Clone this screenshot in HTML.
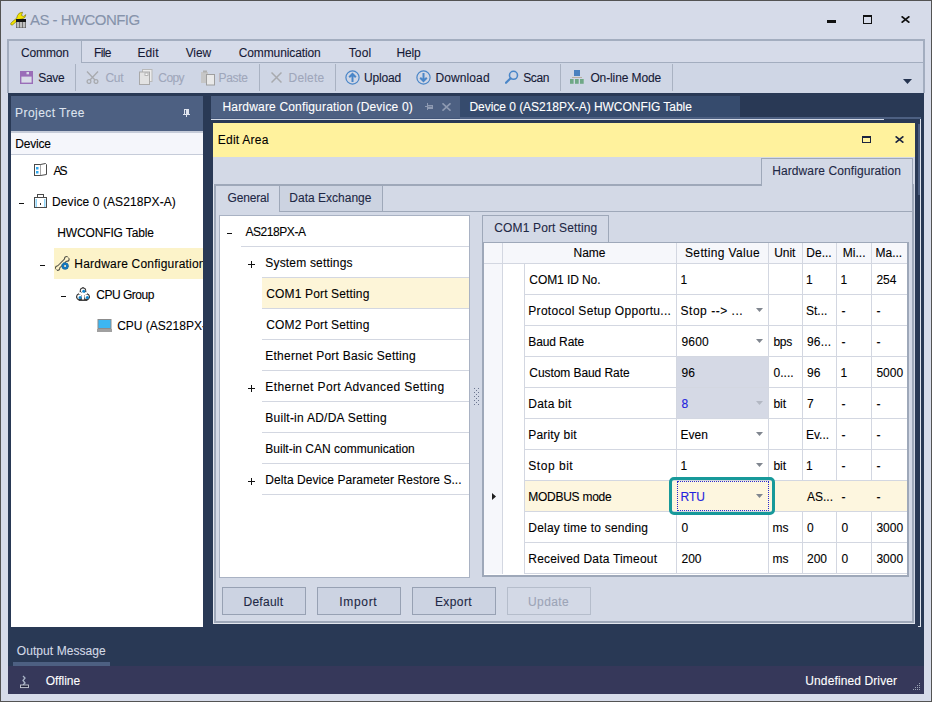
<!DOCTYPE html><html><head><meta charset="utf-8"><style>
html,body{margin:0;padding:0;width:932px;height:702px;overflow:hidden;}
body{position:relative;font-family:"Liberation Sans",sans-serif;font-size:12px;}
body>div,body>svg{position:absolute;}
.t{white-space:nowrap;line-height:20px;height:20px;-webkit-text-stroke:0.1px currentColor;}
</style></head><body>
<div style="left:0px;top:0px;width:932px;height:702px;background:#d6dbe9;"></div>
<div style="left:0px;top:0px;width:932px;height:1px;background:#535353;"></div>
<div style="left:0px;top:701px;width:932px;height:1px;background:#535353;"></div>
<div style="left:0px;top:0px;width:1px;height:702px;background:#535353;"></div>
<div style="left:931px;top:0px;width:1px;height:702px;background:#535353;"></div>
<div class="t" style="left:30.00px;top:10px;font-size:15px;color:#8693ab;letter-spacing:-0.542px;">AS - HWCONFIG</div>
<svg style="left:10px;top:11px" width="17" height="17" viewBox="0 0 17 17">
<path d="M0.6 12.8 Q0.8 14.6 2.6 13.9 L8.5 8.6 L12 8 Q15.6 7.2 15.9 3.6 L13.6 5.4 L11.4 4.4 L12.6 1.2 Q8.8 1.2 7.4 4.6 L6.8 7 L1.4 11.6 Z" fill="#f3e400" stroke="#746c00" stroke-width="0.6" stroke-linejoin="round"/>
<rect x="6" y="8" width="10" height="9" fill="#4a4a4a"/>
<rect x="6" y="8" width="10" height="3" fill="#141414"/>
<rect x="6.6" y="11" width="2.4" height="5.6" fill="#bfbfbf"/><rect x="9.6" y="11" width="2.6" height="5.6" fill="#bfbfbf"/><rect x="12.8" y="11" width="2.6" height="5.6" fill="#bfbfbf"/>
</svg>
<div style="left:827px;top:20px;width:9px;height:3px;background:#111;"></div>
<div style="left:863px;top:15px;width:9px;height:9px;border:1px solid #111;border-top-width:2px;box-sizing:border-box;"></div>
<svg style="left:901px;top:16px" width="9" height="7" viewBox="0 0 9 7"><path d="M0.6 0.4 L8.4 6.6 M8.4 0.4 L0.6 6.6" stroke="#111" stroke-width="1.8"/></svg>
<div style="left:7px;top:39px;width:918px;height:24px;background:#d6dbe9;border:2px solid #a3adbf;border-bottom:none;box-sizing:border-box;"></div>
<div style="left:7px;top:62px;width:918px;height:31px;background:#cfd6e5;border-left:2px solid #a3adbf;border-right:2px solid #a3adbf;border-top:1px solid #a3adbf;box-sizing:border-box;"></div>
<div style="left:7px;top:39px;width:75px;height:24px;background:#cfd6e5;border:2px solid #a3adbf;border-right-width:1px;border-bottom:none;box-sizing:border-box;"></div>
<div class="t" style="left:21.00px;top:43px;font-size:12px;color:#161a36;letter-spacing:-0.140px;">Common</div>
<div class="t" style="left:94.00px;top:43px;font-size:12px;color:#161a36;letter-spacing:-0.633px;">File</div>
<div class="t" style="left:137.40px;top:43px;font-size:12px;color:#161a36;letter-spacing:0.133px;">Edit</div>
<div class="t" style="left:185.70px;top:43px;font-size:12px;color:#161a36;letter-spacing:-0.100px;">View</div>
<div class="t" style="left:238.70px;top:43px;font-size:12px;color:#161a36;letter-spacing:-0.108px;">Communication</div>
<div class="t" style="left:348.70px;top:43px;font-size:12px;color:#161a36;letter-spacing:0.133px;">Tool</div>
<div class="t" style="left:396.60px;top:43px;font-size:12px;color:#161a36;letter-spacing:-0.233px;">Help</div>
<div style="left:75px;top:64px;width:1px;height:27px;background:#a9b2c2;"></div>
<div style="left:259px;top:64px;width:1px;height:27px;background:#a9b2c2;"></div>
<div style="left:335px;top:64px;width:1px;height:27px;background:#a9b2c2;"></div>
<div style="left:560px;top:64px;width:1px;height:27px;background:#a9b2c2;"></div>
<div style="left:672px;top:64px;width:1px;height:27px;background:#a9b2c2;"></div>
<div class="t" style="left:38.30px;top:68px;font-size:12px;color:#161a36;letter-spacing:-0.300px;">Save</div>
<div class="t" style="left:105.50px;top:68px;font-size:12px;color:#9fa7bb;letter-spacing:-0.350px;">Cut</div>
<div class="t" style="left:158.30px;top:68px;font-size:12px;color:#9fa7bb;letter-spacing:-0.567px;">Copy</div>
<div class="t" style="left:218.60px;top:68px;font-size:12px;color:#9fa7bb;letter-spacing:-0.350px;">Paste</div>
<div class="t" style="left:288.60px;top:68px;font-size:12px;color:#9fa7bb;letter-spacing:0.160px;">Delete</div>
<div class="t" style="left:364.10px;top:68px;font-size:12px;color:#161a36;letter-spacing:-0.200px;">Upload</div>
<div class="t" style="left:435.40px;top:68px;font-size:12px;color:#161a36;letter-spacing:0.114px;">Download</div>
<div class="t" style="left:523.30px;top:68px;font-size:12px;color:#161a36;letter-spacing:-0.433px;">Scan</div>
<div class="t" style="left:590.40px;top:68px;font-size:12px;color:#161a36;letter-spacing:-0.109px;">On-line Mode</div>
<svg style="left:20px;top:71px" width="13" height="13" viewBox="0 0 13 13"><rect x="0" y="0" width="13" height="13" fill="#9a6db8"/><rect x="1.4" y="5.6" width="10.2" height="6" fill="#d9dce8"/><rect x="6.5" y="1" width="2.5" height="2.3" fill="#d9dce8"/></svg>
<svg style="left:86px;top:71px" width="13" height="13" viewBox="0 0 13 13"><path d="M1 0.5 L9 9 M12 0.5 L4 9" stroke="#a8aaae" stroke-width="1.3"/><circle cx="3" cy="10.5" r="1.9" fill="none" stroke="#a8aaae" stroke-width="1.3"/><circle cx="10" cy="10.5" r="1.9" fill="none" stroke="#a8aaae" stroke-width="1.3"/></svg>
<svg style="left:139px;top:69px" width="14" height="16" viewBox="0 0 14 16"><rect x="3.5" y="0.5" width="9.5" height="12" fill="#ececec" stroke="#b9b9b9"/><rect x="0.5" y="3" width="10" height="12.5" fill="#e2e2e2" stroke="#a9a9a9"/><rect x="6" y="4" width="3" height="2.5" fill="#fafafa" stroke="#a9a9a9" stroke-width="0.8"/></svg>
<svg style="left:201px;top:70px" width="14" height="16" viewBox="0 0 14 16"><rect x="0" y="2" width="7" height="11" fill="#c6c6c6"/><rect x="2" y="0.5" width="4" height="2" fill="#b0b0b0"/><rect x="5.5" y="4.5" width="8" height="10.5" fill="#e9e9e9" stroke="#9e9e9e" stroke-width="1"/></svg>
<svg style="left:271px;top:72px" width="11" height="11" viewBox="0 0 11 11"><path d="M0.5 0.5 L10.5 10.5 M10.5 0.5 L0.5 10.5" stroke="#a8aaae" stroke-width="1.5"/></svg>
<svg style="left:345px;top:70px" width="15" height="15" viewBox="0 0 15 15"><circle cx="7.5" cy="7.5" r="6.6" fill="none" stroke="#4a86c8" stroke-width="1.2"/><path d="M7.5 12 V4 M4.2 7.3 L7.5 4 L10.8 7.3" fill="none" stroke="#4a86c8" stroke-width="2"/></svg>
<svg style="left:416px;top:70px" width="15" height="15" viewBox="0 0 15 15"><circle cx="7.5" cy="7.5" r="6.6" fill="none" stroke="#4a86c8" stroke-width="1.2"/><path d="M7.5 3 V11 M4.2 7.7 L7.5 11 L10.8 7.7" fill="none" stroke="#4a86c8" stroke-width="2"/></svg>
<svg style="left:505px;top:70px" width="14" height="14" viewBox="0 0 14 14"><circle cx="8.5" cy="5.3" r="4" fill="none" stroke="#4a86c8" stroke-width="1.6"/><path d="M5.6 8.2 L1 12.8" stroke="#4a86c8" stroke-width="2.2" stroke-linecap="round"/></svg>
<svg style="left:570px;top:69px" width="14" height="15" viewBox="0 0 14 15"><rect x="4" y="1" width="6" height="6" fill="#4a81bf"/><rect x="2" y="8" width="10" height="1" fill="#b9ada0"/><rect x="0" y="10" width="3.6" height="4.8" fill="#6fa886"/><rect x="5" y="10" width="3.7" height="4.8" fill="#6fa886"/><rect x="10" y="10" width="3.7" height="4.8" fill="#6fa886"/></svg>
<svg style="left:903px;top:79px" width="9" height="5" viewBox="0 0 9 5"><path d="M0 0 H9 L4.5 5 Z" fill="#253450"/></svg>
<div style="left:8px;top:93px;width:916px;height:573px;background:#293955;"></div>
<div style="left:8px;top:666px;width:916px;height:28px;background:#36385a;"></div>
<div style="left:11px;top:96px;width:192px;height:35px;background:#4d6082;"></div>
<div class="t" style="left:15.10px;top:103px;font-size:12px;color:#dde3ee;letter-spacing:0.427px;">Project Tree</div>
<svg style="left:183px;top:109px" width="7" height="8" viewBox="0 0 7 8"><rect x="1" y="0" width="5" height="5" fill="#dfe4ee"/><rect x="2" y="1" width="1" height="4" fill="#56688a"/><rect x="0" y="5" width="7" height="1" fill="#dfe4ee"/><rect x="3" y="6" width="1" height="2" fill="#dfe4ee"/></svg>
<div style="left:11px;top:131px;width:192px;height:2px;background:#c6ccd9;"></div>
<div style="left:11px;top:133px;width:192px;height:21px;background:#f5f6fb;"></div>
<div style="left:11px;top:154px;width:192px;height:1px;background:#c6ccd9;"></div>
<div style="left:11px;top:155px;width:192px;height:472px;background:#ffffff;"></div>
<div class="t" style="left:15.20px;top:134px;font-size:12px;color:#000000;letter-spacing:-0.180px;">Device</div>
<div style="left:54px;top:248px;width:149px;height:31px;background:#fcf3c9;"></div>
<div class="t" style="left:53.40px;top:161px;font-size:12px;color:#000000;letter-spacing:-1.800px;">AS</div>
<div style="left:19px;top:203px;width:5px;height:1px;background:#111;"></div>
<div class="t" style="left:52.10px;top:192px;font-size:12px;color:#000000;letter-spacing:0.089px;">Device 0 (AS218PX-A)</div>
<div class="t" style="left:57.20px;top:223px;font-size:12px;color:#000000;letter-spacing:-0.131px;">HWCONFIG Table</div>
<div style="left:40px;top:265px;width:5px;height:1px;background:#111;"></div>
<div class="t" style="left:74.30px;top:254px;font-size:12px;color:#000000;letter-spacing:0.214px;width:128.70px;overflow:hidden;">Hardware Configuration</div>
<div style="left:61px;top:296px;width:5px;height:1px;background:#111;"></div>
<div class="t" style="left:96.30px;top:285px;font-size:12px;color:#000000;letter-spacing:-0.487px;">CPU Group</div>
<div class="t" style="left:117.20px;top:316px;font-size:12px;color:#000000;width:85.80px;overflow:hidden;">CPU (AS218PX-A)</div>
<div style="left:203px;top:96px;width:8px;height:531px;background:#293955;"></div>
<svg style="left:34px;top:163px" width="13" height="13" viewBox="0 0 13 13"><rect x="0.5" y="1.5" width="6" height="11" fill="#fff" stroke="#4a4a4a"/><path d="M6.5 1.5 L11.5 0.5 L12.5 1.5 V11.5 L6.5 12.5" fill="#fff" stroke="#4a4a4a"/><rect x="2" y="4" width="2.5" height="2.5" fill="#2ea8ef"/><rect x="2" y="8" width="2.5" height="2.5" fill="#2ea8ef"/></svg>
<svg style="left:34px;top:194px" width="13" height="14" viewBox="0 0 13 14"><rect x="3.5" y="0.5" width="6" height="3" fill="#fff" stroke="#4a4a4a"/><rect x="0.5" y="3.5" width="12" height="10" fill="#fff" stroke="#4a4a4a"/><rect x="1.5" y="5" width="1.5" height="8" fill="#8fd3f7"/><rect x="10" y="5" width="1.5" height="8" fill="#8fd3f7"/><rect x="6" y="9" width="1" height="2" fill="#333"/></svg>
<svg style="left:55px;top:256px" width="15" height="15" viewBox="0 0 15 15">
<path d="M2.6 12 L11.4 3.2" stroke="#55544a" stroke-width="3.8" stroke-linecap="round"/>
<circle cx="11.8" cy="2.9" r="2.9" fill="#55544a"/><circle cx="2.5" cy="12.2" r="2.7" fill="#55544a"/>
<path d="M2.6 12 L11.4 3.2" stroke="#fdf3c9" stroke-width="1.8"/>
<circle cx="11.8" cy="2.9" r="1.8" fill="#fdf3c9"/><circle cx="2.5" cy="12.2" r="1.6" fill="#fdf3c9"/>
<path d="M13 0 L15 2 M0 13.5 L1.5 15" stroke="#fdf3c9" stroke-width="1.6"/>
<circle cx="10.1" cy="10" r="3.5" fill="#1678bd"/><circle cx="10.1" cy="10" r="3.5" fill="none" stroke="#0b4f86" stroke-width="0.6" stroke-dasharray="1 1"/>
<rect x="9.2" y="9.1" width="1.8" height="1.8" fill="#fde6bf"/>
</svg>
<svg style="left:76px;top:287px" width="14" height="14" viewBox="0 0 14 14">
<path d="M7 0.3 L13.6 10 L11 13.6 H3 L0.4 10 Z" fill="#3a3a3a" stroke="#3a3a3a" stroke-width="1" stroke-linejoin="round"/>
<circle cx="7" cy="3.6" r="3.2" fill="#3a3a3a"/><circle cx="3.4" cy="9.8" r="3.2" fill="#3a3a3a"/><circle cx="10.6" cy="9.8" r="3.2" fill="#3a3a3a"/>
<path d="M7 5 V12.5 M7 8 L3 5.5 M7 8 L11 5.5" stroke="#fff" stroke-width="2.2"/>
<circle cx="7" cy="3.6" r="2.2" fill="#fff"/><circle cx="3.4" cy="9.8" r="2.2" fill="#fff"/><circle cx="10.6" cy="9.8" r="2.2" fill="#fff"/>
<circle cx="7.7" cy="4.3" r="1.5" fill="#0f86d0"/><circle cx="4.1" cy="10.5" r="1.5" fill="#0f86d0"/><circle cx="11.3" cy="10.5" r="1.5" fill="#0f86d0"/>
</svg>
<svg style="left:97px;top:319px" width="15" height="13" viewBox="0 0 15 13"><rect x="1" y="0.5" width="13" height="9" fill="#3cb6f2" stroke="#8c8c8c"/><rect x="0" y="10" width="15" height="3" fill="#a0a0a0"/></svg>
<div style="left:211px;top:96px;width:249px;height:23px;background:#4d6082;"></div>
<div style="left:460px;top:96px;width:280px;height:21px;background:#364b6d;"></div>
<div style="left:460px;top:117px;width:461px;height:2px;background:#4d6082;"></div>
<div style="left:211px;top:118px;width:249px;height:1px;background:#44577a;"></div>
<div class="t" style="left:222.50px;top:97px;font-size:12px;color:#ffffff;letter-spacing:0.172px;">Hardware Configuration (Device 0)</div>
<svg style="left:425px;top:103px" width="9" height="7" viewBox="0 0 9 7"><rect x="0" y="3" width="2" height="1" fill="#8e9ab2"/><rect x="2" y="0" width="1" height="7" fill="#8e9ab2"/><rect x="3" y="2" width="5" height="4" fill="#8e9ab2"/><rect x="3" y="3" width="4" height="1" fill="#6d7c98"/></svg>
<svg style="left:442px;top:103px" width="9" height="8" viewBox="0 0 9 8"><path d="M0.5 0.3 L8.5 7.7 M8.5 0.3 L0.5 7.7" stroke="#8e9ab2" stroke-width="1.6"/></svg>
<div class="t" style="left:469.50px;top:97px;font-size:12px;color:#ffffff;letter-spacing:-0.044px;">Device 0 (AS218PX-A) HWCONFIG Table</div>
<div style="left:211px;top:119px;width:673px;height:1px;background:#d4dae6;"></div>
<div style="left:213px;top:123px;width:702px;height:34px;background:#fff29d;"></div>
<div class="t" style="left:217.80px;top:130px;font-size:12px;color:#000000;letter-spacing:0.237px;">Edit Area</div>
<div style="left:862px;top:136px;width:9px;height:7px;border:1px solid #1b2440;border-top-width:2px;box-sizing:border-box;"></div>
<svg style="left:895px;top:136px" width="9" height="7" viewBox="0 0 9 7"><path d="M0.6 0.4 L8.4 6.6 M8.4 0.4 L0.6 6.6" stroke="#1b2440" stroke-width="1.7"/></svg>
<div style="left:213px;top:157px;width:702px;height:467px;background:#d3d9e6;"></div>
<div style="left:213px;top:184px;width:1px;height:440px;background:#e3e7ef;"></div>
<div style="left:213px;top:623px;width:702px;height:1px;background:#e3e7ef;"></div>
<div style="left:214px;top:184px;width:700px;height:439px;border:2px solid #9ea8b9;box-sizing:border-box;"></div>
<div style="left:761px;top:158px;width:152px;height:28px;background:#d3d9e6;border:1px solid #9ea8b9;border-bottom:none;box-sizing:border-box;"></div>
<div class="t" style="left:772.20px;top:161px;font-size:12px;color:#1e2845;letter-spacing:0.100px;">Hardware Configuration</div>
<div style="left:216px;top:186px;width:64px;height:26px;background:#d3d9e6;border-right:1px solid #9ea8b9;box-sizing:border-box;"></div>
<div style="left:280px;top:186px;width:103px;height:26px;background:#ccd3e1;border-right:1px solid #9ea8b9;border-bottom:1px solid #9ea8b9;box-sizing:border-box;"></div>
<div style="left:383px;top:211px;width:530px;height:1px;background:#9ea8b9;"></div>
<div class="t" style="left:227.60px;top:188px;font-size:12px;color:#1e2845;letter-spacing:-0.200px;">General</div>
<div class="t" style="left:289.30px;top:188px;font-size:12px;color:#1e2845;letter-spacing:0.008px;">Data Exchange</div>
<div style="left:219px;top:215px;width:251px;height:363px;background:#fff;border:1px solid #a9b2c3;box-sizing:border-box;"></div>
<div style="left:227px;top:233px;width:5px;height:1px;background:#111;"></div>
<div class="t" style="left:245.40px;top:222px;font-size:12px;color:#000000;letter-spacing:-0.425px;">AS218PX-A</div>
<div style="left:241px;top:246px;width:228px;height:1px;background:#d3d7e1;"></div>
<div style="left:262px;top:277px;width:207px;height:1px;background:#d3d7e1;"></div>
<div style="left:248px;top:264px;width:7px;height:1px;background:#111;"></div>
<div style="left:251px;top:261px;width:1px;height:7px;background:#111;"></div>
<div class="t" style="left:265.30px;top:253px;font-size:12px;color:#000000;letter-spacing:0.179px;">System settings</div>
<div style="left:262px;top:278px;width:207px;height:31px;background:#fdf5d8;"></div>
<div style="left:262px;top:308px;width:207px;height:1px;background:#d3d7e1;"></div>
<div class="t" style="left:266.30px;top:284px;font-size:12px;color:#000000;letter-spacing:0.144px;">COM1 Port Setting</div>
<div style="left:262px;top:339px;width:207px;height:1px;background:#d3d7e1;"></div>
<div class="t" style="left:266.30px;top:315px;font-size:12px;color:#000000;letter-spacing:0.144px;">COM2 Port Setting</div>
<div style="left:262px;top:370px;width:207px;height:1px;background:#d3d7e1;"></div>
<div class="t" style="left:265.30px;top:346px;font-size:12px;color:#000000;letter-spacing:0.238px;">Ethernet Port Basic Setting</div>
<div style="left:262px;top:401px;width:207px;height:1px;background:#d3d7e1;"></div>
<div style="left:248px;top:388px;width:7px;height:1px;background:#111;"></div>
<div style="left:251px;top:385px;width:1px;height:7px;background:#111;"></div>
<div class="t" style="left:265.30px;top:377px;font-size:12px;color:#000000;letter-spacing:0.390px;">Ethernet Port Advanced Setting</div>
<div style="left:262px;top:432px;width:207px;height:1px;background:#d3d7e1;"></div>
<div class="t" style="left:265.30px;top:408px;font-size:12px;color:#000000;letter-spacing:0.248px;">Built-in AD/DA Setting</div>
<div style="left:262px;top:463px;width:207px;height:1px;background:#d3d7e1;"></div>
<div class="t" style="left:265.30px;top:439px;font-size:12px;color:#000000;letter-spacing:0.004px;">Built-in CAN communication</div>
<div style="left:262px;top:494px;width:207px;height:1px;background:#d3d7e1;"></div>
<div style="left:248px;top:481px;width:7px;height:1px;background:#111;"></div>
<div style="left:251px;top:478px;width:1px;height:7px;background:#111;"></div>
<div class="t" style="left:265.30px;top:470px;font-size:12px;color:#000000;letter-spacing:0.065px;">Delta Device Parameter Restore S...</div>
<svg style="left:474px;top:388px" width="5" height="17" viewBox="0 0 5 17"><rect x="0" y="0" width="1" height="1" fill="#6b7590"/><rect x="4" y="0" width="1" height="1" fill="#6b7590"/><rect x="0" y="4" width="1" height="1" fill="#6b7590"/><rect x="4" y="4" width="1" height="1" fill="#6b7590"/><rect x="0" y="8" width="1" height="1" fill="#6b7590"/><rect x="4" y="8" width="1" height="1" fill="#6b7590"/><rect x="0" y="12" width="1" height="1" fill="#6b7590"/><rect x="4" y="12" width="1" height="1" fill="#6b7590"/><rect x="0" y="16" width="1" height="1" fill="#6b7590"/><rect x="4" y="16" width="1" height="1" fill="#6b7590"/><rect x="2" y="2" width="1" height="1" fill="#6b7590"/><rect x="2" y="6" width="1" height="1" fill="#6b7590"/><rect x="2" y="10" width="1" height="1" fill="#6b7590"/><rect x="2" y="14" width="1" height="1" fill="#6b7590"/></svg>
<div style="left:482px;top:215px;width:127px;height:28px;background:#d3d9e6;border:1px solid #9ea8b9;border-bottom:none;box-sizing:border-box;"></div>
<div class="t" style="left:494.30px;top:218px;font-size:12px;color:#1e2845;letter-spacing:0.138px;">COM1 Port Setting</div>
<div style="left:482px;top:242px;width:427px;height:335px;background:#fff;border:2px solid #9ea8b9;border-top-width:1px;box-sizing:border-box;"></div>
<div style="left:484px;top:243px;width:423px;height:20px;background:#f6f7fb;"></div>
<div style="left:484px;top:263px;width:18px;height:311px;background:#f6f7fb;"></div>
<div style="left:484px;top:263px;width:423px;height:1px;background:#d3d7e1;"></div>
<div style="left:502px;top:243px;width:1px;height:331px;background:#d3d7e1;"></div>
<div style="left:524px;top:264px;width:1px;height:310px;background:#d3d7e1;"></div>
<div style="left:676px;top:243px;width:1px;height:331px;background:#d3d7e1;"></div>
<div style="left:768px;top:243px;width:1px;height:331px;background:#d3d7e1;"></div>
<div style="left:802px;top:243px;width:1px;height:331px;background:#d3d7e1;"></div>
<div style="left:836px;top:243px;width:1px;height:331px;background:#d3d7e1;"></div>
<div style="left:871px;top:243px;width:1px;height:331px;background:#d3d7e1;"></div>
<div class="t" style="left:573.50px;top:243px;font-size:12px;color:#000000;">Name</div>
<div class="t" style="left:685.00px;top:243px;font-size:12px;color:#000000;letter-spacing:0.358px;">Setting Value</div>
<div class="t" style="left:774.20px;top:243px;font-size:12px;color:#000000;letter-spacing:-0.067px;">Unit</div>
<div class="t" style="left:806.30px;top:243px;font-size:12px;color:#000000;">De...</div>
<div class="t" style="left:842.80px;top:243px;font-size:12px;color:#000000;">Mi...</div>
<div class="t" style="left:875.50px;top:243px;font-size:12px;color:#000000;">Ma...</div>
<div style="left:525px;top:294px;width:382px;height:1px;background:#d3d7e1;"></div>
<div class="t" style="left:529.30px;top:270px;font-size:12px;color:#000000;letter-spacing:-0.080px;">COM1 ID No.</div>
<div class="t" style="left:680.50px;top:270px;font-size:12px;color:#000000;">1</div>
<div class="t" style="left:806.00px;top:270px;font-size:12px;color:#000000;">1</div>
<div class="t" style="left:840.50px;top:270px;font-size:12px;color:#000000;">1</div>
<div class="t" style="left:876.40px;top:270px;font-size:12px;color:#000000;">254</div>
<div style="left:525px;top:325px;width:382px;height:1px;background:#d3d7e1;"></div>
<div class="t" style="left:528.30px;top:301px;font-size:12px;color:#000000;letter-spacing:0.300px;">Protocol Setup Opportu...</div>
<div class="t" style="left:680.50px;top:301px;font-size:12px;color:#000000;letter-spacing:0.527px;">Stop --&gt; ...</div>
<svg style="left:756px;top:308px" width="7" height="4" viewBox="0 0 7 4"><path d="M0 0 H7 L3.5 4 Z" fill="#80868f"/></svg>
<div class="t" style="left:806.00px;top:301px;font-size:12px;color:#000000;">St...</div>
<div class="t" style="left:841.50px;top:301px;font-size:12px;color:#000000;">-</div>
<div class="t" style="left:876.40px;top:301px;font-size:12px;color:#000000;">-</div>
<div style="left:525px;top:356px;width:382px;height:1px;background:#d3d7e1;"></div>
<div class="t" style="left:528.30px;top:332px;font-size:12px;color:#000000;letter-spacing:-0.112px;">Baud Rate</div>
<div class="t" style="left:681.50px;top:332px;font-size:12px;color:#000000;letter-spacing:0.200px;">9600</div>
<svg style="left:756px;top:339px" width="7" height="4" viewBox="0 0 7 4"><path d="M0 0 H7 L3.5 4 Z" fill="#80868f"/></svg>
<div class="t" style="left:773.40px;top:332px;font-size:12px;color:#000000;letter-spacing:-0.200px;">bps</div>
<div class="t" style="left:807.00px;top:332px;font-size:12px;color:#000000;letter-spacing:0.200px;">96...</div>
<div class="t" style="left:841.50px;top:332px;font-size:12px;color:#000000;">-</div>
<div class="t" style="left:876.40px;top:332px;font-size:12px;color:#000000;">-</div>
<div style="left:677px;top:357px;width:91px;height:31px;background:#d5d9e5;"></div>
<div style="left:525px;top:387px;width:382px;height:1px;background:#d3d7e1;"></div>
<div class="t" style="left:529.30px;top:363px;font-size:12px;color:#000000;letter-spacing:-0.073px;">Custom Baud Rate</div>
<div class="t" style="left:681.50px;top:363px;font-size:12px;color:#000000;">96</div>
<div class="t" style="left:773.40px;top:363px;font-size:12px;color:#000000;letter-spacing:0.075px;">0....</div>
<div class="t" style="left:807.00px;top:363px;font-size:12px;color:#000000;">96</div>
<div class="t" style="left:840.50px;top:363px;font-size:12px;color:#000000;">1</div>
<div class="t" style="left:876.40px;top:363px;font-size:12px;color:#000000;">5000</div>
<div style="left:677px;top:388px;width:91px;height:30px;background:#d5d9e5;"></div>
<div style="left:525px;top:418px;width:382px;height:1px;background:#d3d7e1;"></div>
<div class="t" style="left:528.30px;top:394px;font-size:12px;color:#000000;letter-spacing:0.229px;">Data bit</div>
<div class="t" style="left:681.50px;top:394px;font-size:12px;color:#2222dd;">8</div>
<svg style="left:756px;top:401px" width="7" height="4" viewBox="0 0 7 4"><path d="M0 0 H7 L3.5 4 Z" fill="#b3b8c3"/></svg>
<div class="t" style="left:773.40px;top:394px;font-size:12px;color:#000000;">bit</div>
<div class="t" style="left:807.00px;top:394px;font-size:12px;color:#000000;">7</div>
<div class="t" style="left:841.50px;top:394px;font-size:12px;color:#000000;">-</div>
<div class="t" style="left:876.40px;top:394px;font-size:12px;color:#000000;">-</div>
<div style="left:525px;top:449px;width:382px;height:1px;background:#d3d7e1;"></div>
<div class="t" style="left:528.30px;top:425px;font-size:12px;color:#000000;letter-spacing:0.178px;">Parity bit</div>
<div class="t" style="left:680.50px;top:425px;font-size:12px;color:#000000;">Even</div>
<svg style="left:756px;top:432px" width="7" height="4" viewBox="0 0 7 4"><path d="M0 0 H7 L3.5 4 Z" fill="#80868f"/></svg>
<div class="t" style="left:806.00px;top:425px;font-size:12px;color:#000000;">Ev...</div>
<div class="t" style="left:841.50px;top:425px;font-size:12px;color:#000000;">-</div>
<div class="t" style="left:876.40px;top:425px;font-size:12px;color:#000000;">-</div>
<div style="left:525px;top:480px;width:382px;height:1px;background:#d3d7e1;"></div>
<div class="t" style="left:528.30px;top:456px;font-size:12px;color:#000000;letter-spacing:0.529px;">Stop bit</div>
<div class="t" style="left:680.50px;top:456px;font-size:12px;color:#000000;">1</div>
<svg style="left:756px;top:463px" width="7" height="4" viewBox="0 0 7 4"><path d="M0 0 H7 L3.5 4 Z" fill="#80868f"/></svg>
<div class="t" style="left:773.40px;top:456px;font-size:12px;color:#000000;">bit</div>
<div class="t" style="left:806.00px;top:456px;font-size:12px;color:#000000;">1</div>
<div class="t" style="left:841.50px;top:456px;font-size:12px;color:#000000;">-</div>
<div class="t" style="left:876.40px;top:456px;font-size:12px;color:#000000;">-</div>
<div style="left:525px;top:481px;width:382px;height:30px;background:#fdf6df;"></div>
<div style="left:525px;top:511px;width:382px;height:1px;background:#d3d7e1;"></div>
<div class="t" style="left:528.30px;top:487px;font-size:12px;color:#000000;letter-spacing:-0.270px;">MODBUS mode</div>
<div class="t" style="left:680.50px;top:487px;font-size:12px;color:#2222dd;">RTU</div>
<svg style="left:756px;top:494px" width="7" height="4" viewBox="0 0 7 4"><path d="M0 0 H7 L3.5 4 Z" fill="#80868f"/></svg>
<div class="t" style="left:807.00px;top:487px;font-size:12px;color:#000000;">AS...</div>
<div class="t" style="left:841.50px;top:487px;font-size:12px;color:#000000;">-</div>
<div class="t" style="left:876.40px;top:487px;font-size:12px;color:#000000;">-</div>
<div style="left:525px;top:542px;width:382px;height:1px;background:#d3d7e1;"></div>
<div class="t" style="left:528.30px;top:518px;font-size:12px;color:#000000;letter-spacing:0.215px;">Delay time to sending</div>
<div class="t" style="left:681.50px;top:518px;font-size:12px;color:#000000;">0</div>
<div class="t" style="left:772.40px;top:518px;font-size:12px;color:#000000;">ms</div>
<div class="t" style="left:807.00px;top:518px;font-size:12px;color:#000000;">0</div>
<div class="t" style="left:841.50px;top:518px;font-size:12px;color:#000000;">0</div>
<div class="t" style="left:876.40px;top:518px;font-size:12px;color:#000000;">3000</div>
<div style="left:525px;top:573px;width:382px;height:1px;background:#d3d7e1;"></div>
<div class="t" style="left:528.30px;top:549px;font-size:12px;color:#000000;letter-spacing:0.200px;">Received Data Timeout</div>
<div class="t" style="left:681.50px;top:549px;font-size:12px;color:#000000;">200</div>
<div class="t" style="left:772.40px;top:549px;font-size:12px;color:#000000;">ms</div>
<div class="t" style="left:807.00px;top:549px;font-size:12px;color:#000000;">200</div>
<div class="t" style="left:841.50px;top:549px;font-size:12px;color:#000000;">0</div>
<div class="t" style="left:876.40px;top:549px;font-size:12px;color:#000000;">3000</div>
<svg style="left:492px;top:493px" width="4" height="7" viewBox="0 0 4 7"><path d="M0 0 L4 3.5 L0 7 Z" fill="#1e1e1e"/></svg>
<div style="left:669px;top:477px;width:106px;height:38px;border:3.5px solid #17999a;border-radius:5px;box-sizing:border-box;"></div>
<div style="left:677px;top:481px;width:92px;height:30px;border:1px dotted #2a2ad0;box-sizing:border-box;"></div>
<div style="left:222px;top:587px;width:84px;height:28px;background:#ccd3e2;border:1px solid #97a1b3;box-sizing:border-box;"></div>
<div class="t" style="left:243.50px;top:592px;font-size:12px;color:#1e2845;letter-spacing:0.267px;">Default</div>
<div style="left:317px;top:587px;width:84px;height:28px;background:#ccd3e2;border:1px solid #97a1b3;box-sizing:border-box;"></div>
<div class="t" style="left:339.20px;top:592px;font-size:12px;color:#1e2845;letter-spacing:0.700px;">Import</div>
<div style="left:412px;top:587px;width:84px;height:28px;background:#ccd3e2;border:1px solid #97a1b3;box-sizing:border-box;"></div>
<div class="t" style="left:434.90px;top:592px;font-size:12px;color:#1e2845;letter-spacing:0.420px;">Export</div>
<div style="left:507px;top:587px;width:84px;height:28px;background:#d3d9e6;border:1px solid #b5bdcb;box-sizing:border-box;"></div>
<div class="t" style="left:528.00px;top:592px;font-size:12px;color:#9ca4b6;letter-spacing:0.400px;">Update</div>
<div style="left:918px;top:124px;width:2px;height:71px;background:#4a5c7e;"></div>
<div style="left:920px;top:119px;width:1px;height:508px;background:#dfe4ee;"></div>
<div style="left:918px;top:626px;width:3px;height:1px;background:#dfe4ee;"></div>
<div class="t" style="left:16.80px;top:641px;font-size:12px;color:#d3d9e5;letter-spacing:0.069px;">Output Message</div>
<div style="left:13px;top:662px;width:97px;height:4px;background:#4d6082;"></div>
<div class="t" style="left:45.80px;top:671px;font-size:12px;color:#ffffff;letter-spacing:-0.017px;">Offline</div>
<div class="t" style="left:805.30px;top:671px;font-size:12px;color:#ffffff;letter-spacing:0.113px;">Undefined Driver</div>
<svg style="left:20px;top:675px" width="9" height="14" viewBox="0 0 9 14"><path d="M3 1 L5 3 L3 5.5 L5 8 L3 10" fill="none" stroke="#a9b3c6" stroke-width="1.3"/><rect x="0.5" y="10" width="8" height="2.6" fill="#20223a" stroke="#c8ccd6" stroke-width="0.9"/></svg>
<svg style="left:913px;top:683px" width="8" height="8" viewBox="0 0 8 8"><rect x="6" y="0" width="1" height="1" fill="#9aa3b5"/><rect x="4" y="2" width="1" height="1" fill="#9aa3b5"/><rect x="6" y="2" width="1" height="1" fill="#9aa3b5"/><rect x="2" y="4" width="1" height="1" fill="#9aa3b5"/><rect x="4" y="4" width="1" height="1" fill="#9aa3b5"/><rect x="6" y="4" width="1" height="1" fill="#9aa3b5"/><rect x="0" y="6" width="1" height="1" fill="#9aa3b5"/><rect x="2" y="6" width="1" height="1" fill="#9aa3b5"/><rect x="4" y="6" width="1" height="1" fill="#9aa3b5"/><rect x="6" y="6" width="1" height="1" fill="#9aa3b5"/></svg>
</body></html>
